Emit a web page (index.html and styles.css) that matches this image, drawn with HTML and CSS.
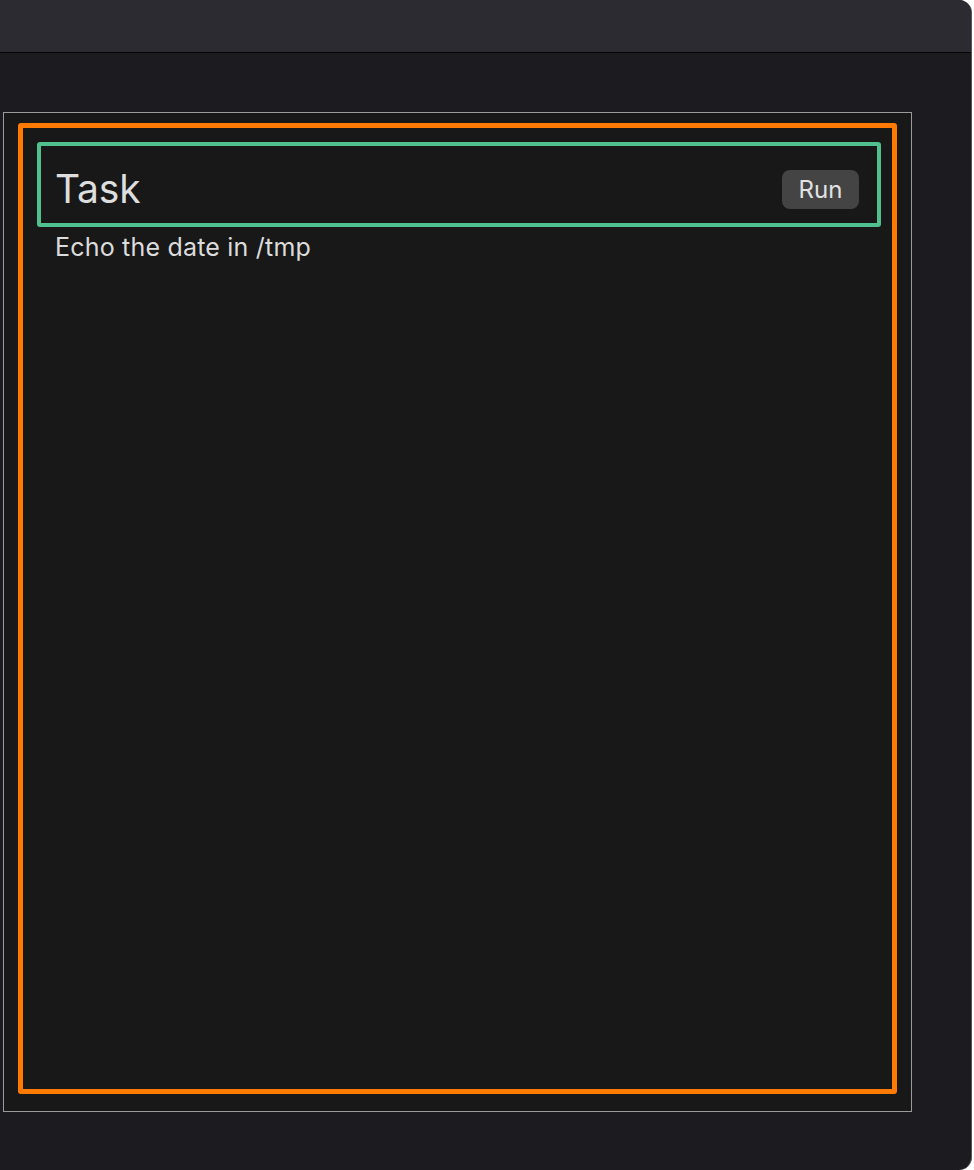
FILE: index.html
```html
<!DOCTYPE html>
<html lang="en">
<head>
    <meta charset="UTF-8">
    <meta name="viewport" content="width=device-width, initial-scale=1.0">
    <title>Task</title>
    <link rel="stylesheet" href="styles.css">
</head>
<body>
    <div class="window">
        <div class="titlebar"></div>

        <div class="content">
            <div class="frame">
                <div class="card">
                    <div class="card-header">
                        <h1 class="title">Task</h1>
                        <button class="run-button">Run</button>
                    </div>
                    <p class="desc">Echo the date in /tmp</p>
                </div>
            </div>
        </div>
    </div>
</body>
</html>
```

FILE: styles.css
```css
* { box-sizing: border-box; }
body { margin: 0; background: #ffffff; font-family: Inter, "Noto Sans", sans-serif; color: #dcdcdc; }
.window { width: 972px; height: 1170px; background: #1c1b20; border-radius: 0 13px 13px 0; border-right: 1px solid #55555a; overflow: hidden; }
.titlebar { height: 53px; background: #2c2b31; border-bottom: 1px solid #050505; }
.content { padding: 59px 0 0 3px; }
.frame { width: 909px; height: 1000px; border: 1px solid #9a9a9e; background: #181818; padding: 10px 14px 0 14px; }
.card { width: 879px; height: 971px; border: 5px solid #ff7a00; border-radius: 3px; padding: 14px 11px 0 14px; }
.card-header { height: 85px; border: 4px solid #50c08e; border-radius: 3px; display: flex; align-items: center; justify-content: space-between; padding: 0 18px 0 14px; }
.title { margin: 0; font-size: 39px; font-weight: 400; color: #dedede; padding-top: 8px; letter-spacing: -0.2px; }
.run-button { width: 77px; height: 39px; margin-top: 10px; background: #444444; color: #e2e2e2; border: none; border-radius: 8px; font-family: Inter, "Noto Sans", sans-serif; font-size: 24px; padding: 0; }
.desc { margin: 5px 0 0 18px; font-size: 25px; letter-spacing: 0.2px; color: #dcdcdc; }
```
